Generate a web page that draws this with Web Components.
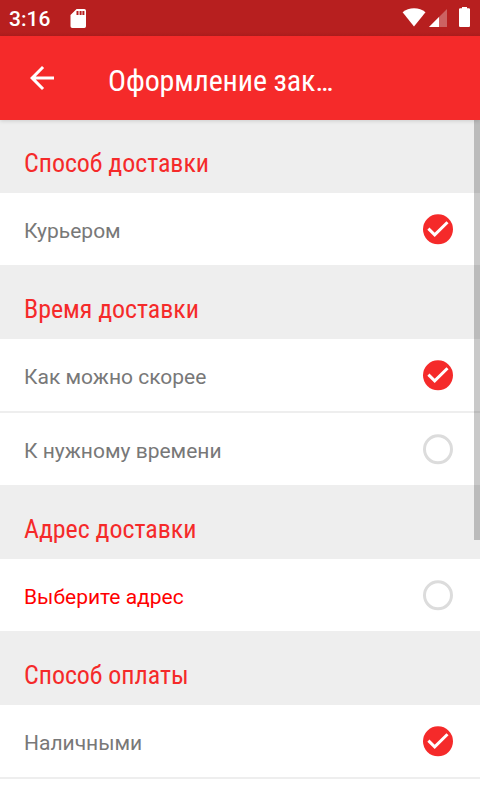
<!DOCTYPE html>
<html lang="ru">
<head>
<meta charset="utf-8">
<title>Оформление заказа</title>
<style>
  body {
    --accent: #f52a2a;
    --grey: #eeeeee;
    background: white;
    font-family: Roboto, "Noto Sans", sans-serif;
    height: 800px;
    margin: 0;
    overflow: hidden;
    width: 480px;
  }
</style>
</head>
<body>

<checkout-screen>
  <status-bar slot="status">3:16</status-bar>
  <app-bar slot="bar">Оформление заказа</app-bar>

  <option-group title="Способ доставки">
    <option-row checked>Курьером</option-row>
  </option-group>
  <option-group title="Время доставки">
    <option-row checked>Как можно скорее</option-row>
    <option-row>К нужному времени</option-row>
  </option-group>
  <option-group title="Адрес доставки">
    <option-row required>Выберите адрес</option-row>
  </option-group>
  <option-group title="Способ оплаты">
    <option-row checked>Наличными</option-row>
    <option-row></option-row>
  </option-group>
</checkout-screen>

<script>
// Attaches an open shadow root with the given markup
function render(element, html) {
  let tmpl = document.createElement('template');
  tmpl.innerHTML = html;
  element.attachShadow({mode: 'open'});
  element.shadowRoot.appendChild(tmpl.content.cloneNode(true));
}

class StatusBar extends HTMLElement {

  constructor() {
    super();
    render(this, `
      <style>
      :host {
        align-items: center;
        background: linear-gradient(#b71f1f 32px, #ab1c1c 36px);
        box-sizing: border-box;
        color: white;
        display: flex;
        font-size: 21px;
        font-weight: 500;
        height: 36px;
        line-height: 36px;
        padding: 1px 10px 0 9px;
      }

      svg {
        display: block;
        fill: white;
        height: 36px;
        margin-top: -1px;
      }

      .sd {
        margin-left: 20px;
      }

      .system {
        margin-left: auto;
      }
      </style>

      <slot></slot>
      <svg class="sd" width="18" viewBox="70 0 18 36">
        <path fill-rule="evenodd" d="M76.6 9H84.3Q86 9 86 10.7V26.2Q86 28 84.3 28H72.3Q70.5 28 70.5 26.2V15zM76.5 11v4h2v-4zM79.6 11v4h2v-4zM82.4 11v4h2v-4z"/>
      </svg>
      <svg class="system" width="70" viewBox="400 0 70 36">
        <path d="M402.6 12.2C408.6 6.9 419.6 6.9 425.5 12.2L414 26.6z"/>
        <path fill-opacity=".3" d="M447 9V27H429z"/>
        <path d="M439 17V27H429z"/>
        <path d="M462 8.2V7H467V8.2H469.2L470 9V26.2L469.2 27H459.8L459 26.2V9L459.8 8.2z"/>
      </svg>
    `);
  }

}

class AppBar extends HTMLElement {

  constructor() {
    super();
    render(this, `
      <style>
      :host {
        align-items: center;
        background: var(--accent);
        box-shadow: 0 1px 4px rgb(0,0,0,0.14);
        box-sizing: border-box;
        clip-path: inset(0 0 -8px 0);
        color: white;
        display: flex;
        font-family: "Roboto Condensed", Roboto, sans-serif;
        font-size: 30px;
        height: 84px;
        letter-spacing: -0.13px;
        padding: 0 24px;
      }

      svg {
        display: block;
        margin-right: 48px;
      }

      .title {
        line-height: 40px;
        overflow: hidden;
        padding-top: 5px;
        text-overflow: ellipsis;
        white-space: nowrap;
        width: 234px;
      }
      </style>

      <svg width="36" height="36" viewBox="0 0 24 24">
        <path fill="white" d="M20 11H7.83l5.59-5.59L12 4l-8 8 8 8 1.41-1.41L7.83 13H20v-2z"/>
      </svg>
      <div class="title"><slot></slot></div>
    `);
  }

}

class OptionGroup extends HTMLElement {

  constructor() {
    super();
    render(this, `
      <style>
      :host {
        display: block;
      }

      h2 {
        background: var(--grey);
        box-sizing: border-box;
        color: var(--accent);
        font: 400 26px/30px "Roboto Condensed", Roboto, sans-serif;
        height: 74px;
        letter-spacing: -0.05px;
        margin: 0;
        padding: 29px 24px 0;
      }

      .rows {
        background: var(--grey);
        display: flex;
        flex-direction: column;
        gap: 2px;
      }
      </style>

      <h2></h2>
      <div class="rows"><slot></slot></div>
    `);
    this.shadowRoot.querySelector('h2').textContent = this.getAttribute('title');
  }

}

class OptionRow extends HTMLElement {

  constructor() {
    super();
    let mark = this.hasAttribute('checked')
      ? `<circle cx="15" cy="15" r="15" fill="#f52a2a"/>
         <path d="M5.4 14.3L11.7 20.5L24.5 8" fill="none" stroke="white" stroke-width="3"/>`
      : `<circle cx="15" cy="15" r="13.5" fill="none" stroke="#dcdcdc" stroke-width="3"/>`;
    render(this, `
      <style>
      :host {
        align-items: center;
        background: white;
        box-sizing: border-box;
        color: #787878;
        display: flex;
        font-size: 21px;
        height: 72px;
        justify-content: space-between;
        padding: 0 27px 0 24px;
      }

      :host([required]) {
        color: #ff0000;
      }

      .label {
        line-height: 26px;
        padding-top: 3px;
      }

      svg {
        display: block;
        overflow: visible;
      }

      /* keeps the circle a third of a pixel under the middle */
      g {
        transform: translateY(0.3px);
      }
      </style>

      <span class="label"><slot></slot></span>
      <svg width="30" height="30" viewBox="0 0 30 30"><g>${mark}</g></svg>
    `);
  }

}

class CheckoutScreen extends HTMLElement {

  constructor() {
    super();
    render(this, `
      <style>
      :host {
        display: flex;
        flex-direction: column;
        height: 800px;
        overflow: hidden;
        position: relative;
      }

      header {
        position: relative;
        z-index: 1;
      }

      /* the list begins one pixel under the bar */
      main {
        flex: 1;
        margin-top: -1px;
        min-height: 0;
        overflow: hidden;
      }

      .scrollbar {
        background: rgb(0,0,0,0.21);
        height: 420px;
        position: absolute;
        right: 0;
        top: 120px;
        width: 6px;
      }
      </style>

      <header>
        <slot name="status"></slot>
        <slot name="bar"></slot>
      </header>
      <main><slot></slot></main>
      <div class="scrollbar"></div>
    `);
  }

}

customElements.define('status-bar', StatusBar);
customElements.define('app-bar', AppBar);
customElements.define('option-row', OptionRow);
customElements.define('option-group', OptionGroup);
customElements.define('checkout-screen', CheckoutScreen);
</script>
</body>
</html>
